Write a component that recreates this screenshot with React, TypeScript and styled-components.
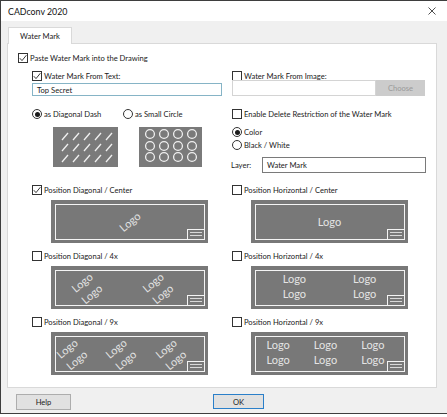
import styled, { createGlobalStyle } from "styled-components"

const GlobalStyle = createGlobalStyle`
  html, body {
    margin: 0;
    padding: 0;
    background: #ffffff;
  }
  body {
    font-family: Lato, "Noto Sans", "Liberation Sans", sans-serif;
    font-size: 7.6px;
    color: #1b1b1b;
  }
  * {
    box-sizing: border-box;
  }
`

const Window = styled.div`
  width: 447px;
  height: 414px;
  border: 1px solid #3e3e3e;
  border-right: none;
  background: #f0f0f0;
  display: flex;
  flex-direction: column;
`

const TitleBar = styled.div`
  height: 20px;
  background: #ffffff;
  display: flex;
  align-items: center;
  justify-content: space-between;
  padding: 0 11px 0 7px;
  font-size: 8.8px;
  color: #111;
`

const Body = styled.div`
  flex: 1;
  padding: 6px 10px 0 6px;
  display: flex;
  flex-direction: column;
`

const TabStrip = styled.div`
  display: flex;
  padding-left: 1px;
`

const Tab = styled.div`
  width: 64px;
  height: 17px;
  margin-bottom: -1px;
  position: relative;
  z-index: 1;
  background: #ffffff;
  border: 1px solid #d9d9d9;
  border-bottom: none;
  display: flex;
  align-items: center;
  justify-content: center;
`

const Panel = styled.div`
  width: 430px;
  height: 345px;
  background: #ffffff;
  border: 1px solid #d9d9d9;
  padding: 8px 10px 0 10px;
`

const Columns = styled.div<{ $mt: number }>`
  display: grid;
  grid-template-columns: 200px 194px;
  margin-left: 14px;
  margin-top: ${(p) => p.$mt}px;
`

const Column = styled.div`
  display: flex;
  flex-direction: column;
`

const Spaced = styled.div<{ $mt: number }>`
  margin-top: ${(p) => p.$mt}px;
`

const CheckRow = styled.label`
  display: flex;
  align-items: center;
  gap: 2px;
  height: 12px;
  white-space: nowrap;
`

const Box = styled.span`
  width: 10px;
  height: 10px;
  border: 1px solid #333333;
  background: #ffffff;
  display: flex;
  align-items: center;
  justify-content: center;
  flex: none;
`

const Round = styled.span`
  width: 10px;
  height: 10px;
  border-radius: 50%;
  border: 1px solid #333333;
  background: #ffffff;
  display: flex;
  align-items: center;
  justify-content: center;
  flex: none;
`

const Dot = styled.span`
  width: 5px;
  height: 5px;
  border-radius: 50%;
  background: #1b1b1b;
`

const Check = ({ label, checked }: { label: string; checked?: boolean }) => (
  <CheckRow>
    <Box>
      {checked ? (
        <svg width="8" height="8" viewBox="0 0 8 8">
          <polyline points="0.8,4.2 3,6.6 7.4,1.2" fill="none" stroke="#222" strokeWidth="0.9" />
        </svg>
      ) : null}
    </Box>
    {label}
  </CheckRow>
)

const Radio = ({ label, checked }: { label: string; checked?: boolean }) => (
  <CheckRow>
    <Round>{checked ? <Dot /> : null}</Round>
    {label}
  </CheckRow>
)

const TextField = styled.div<{ $width: number; $height: number; $border: string }>`
  width: ${(p) => p.$width}px;
  height: ${(p) => p.$height}px;
  border: 1px solid ${(p) => p.$border};
  background: #ffffff;
  display: flex;
  align-items: center;
  padding-left: 4px;
  white-space: nowrap;
`

const ChooseGroup = styled.div`
  display: flex;
  margin-top: -2px;
`

const ChooseButton = styled.div`
  width: 49px;
  height: 16px;
  background: #cccccc;
  color: #9a9a9a;
  display: flex;
  align-items: center;
  justify-content: center;
`

const RadioPair = styled.div`
  display: grid;
  grid-template-columns: 91px auto;
`

const PatternRow = styled.div`
  display: flex;
  gap: 21px;
  padding-left: 21px;
  margin-top: 7px;
`

const PatternBox = styled.div<{ $width: number }>`
  width: ${(p) => p.$width}px;
  height: 40px;
  background: #7a7a7a;
  display: flex;
`

const LayerRow = styled.div`
  display: flex;
  align-items: center;
  margin-top: 6px;
  margin-left: -1px;
`

const LayerLabel = styled.span`
  width: 31px;
`

const Section = styled.div<{ $mt: number }>`
  display: flex;
  flex-direction: column;
  margin-top: ${(p) => p.$mt}px;
`

const PreviewBox = styled.div`
  width: 157px;
  height: 43px;
  margin: 4px 0 0 19px;
  background: #787878;
  padding: 3.5px;
`

const Frame = styled.div`
  position: relative;
  height: 100%;
  border: 1.5px solid #f4f4f4;
  overflow: hidden;
`

const CornerIcon = styled.div`
  position: absolute;
  right: 0;
  bottom: 0;
  width: 17px;
  height: 10px;
  border-top: 1.5px solid #f4f4f4;
  border-left: 1.5px solid #f4f4f4;
  background: #787878;
  display: flex;
  flex-direction: column;
  justify-content: center;
  gap: 1.5px;
  padding: 0 2px;
  z-index: 2;
`

const CornerLine = styled.span`
  height: 1px;
  background: #d8d8d8;
`

const LogoText = styled.span`
  font-size: 11px;
  line-height: 15px;
  color: #e4e4e4;
`

const LogoGrid = styled.div<{ $cols: number; $gap: number; $shift: number; $lift: number }>`
  height: 100%;
  display: grid;
  grid-template-columns: repeat(${(p) => p.$cols}, auto);
  column-gap: ${(p) => p.$gap}px;
  justify-content: center;
  align-content: center;
  justify-items: center;
  padding-right: ${(p) => p.$shift}px;
  padding-bottom: ${(p) => p.$lift}px;
`

const DiagonalRow = styled.div<{ $gap: number; $shift: number }>`
  height: 100%;
  display: flex;
  align-items: center;
  justify-content: center;
  gap: ${(p) => p.$gap}px;
  padding-right: ${(p) => p.$shift}px;
`

const DiagonalGroup = styled.div`
  display: flex;
  flex-direction: column;
  align-items: center;
  transform: rotate(-40deg);
`

const Footer = styled.div`
  display: flex;
  align-items: flex-start;
  padding: 6px 0 0 9px;
`

const Button = styled.div<{ $width: number; $primary?: boolean }>`
  width: ${(p) => p.$width}px;
  height: ${(p) => (p.$primary ? 15 : 16)}px;
  margin-left: ${(p) => (p.$primary ? 142 : 0)}px;
  background: #e1e1e1;
  border: ${(p) => (p.$primary ? "1.5px solid #2a7fc9" : "1px solid #adadad")};
  display: flex;
  align-items: center;
  justify-content: center;
`

const DashPattern = () => (
  <svg width="65" height="40" viewBox="0 0 65 40">
    {[0, 1, 2].map((r) =>
      [0, 1, 2, 3, 4].map((c) => (
        <line
          key={`${r}-${c}`}
          x1={9 + c * 11}
          y1={13 + r * 11}
          x2={15 + c * 11}
          y2={6 + r * 11}
          stroke="#f0f0f0"
          strokeWidth="1.3"
        />
      ))
    )}
  </svg>
)

const CirclePattern = () => (
  <svg width="63" height="40" viewBox="0 0 63 40">
    {[7, 19, 30].map((y) =>
      [11, 25, 39, 53].map((x) => (
        <circle key={`${x}-${y}`} cx={x} cy={y} r="4.4" fill="none" stroke="#f0f0f0" strokeWidth="1.3" />
      ))
    )}
  </svg>
)

const Preview = ({ children }: { children: React.ReactNode }) => (
  <PreviewBox>
    <Frame>
      {children}
      <CornerIcon>
        <CornerLine />
        <CornerLine />
      </CornerIcon>
    </Frame>
  </PreviewBox>
)

const Diagonal = ({ groups, perGroup, gap, shift }: { groups: number; perGroup: number; gap: number; shift: number }) => (
  <DiagonalRow $gap={gap} $shift={shift}>
    {Array.from({ length: groups }).map((_, i) => (
      <DiagonalGroup key={i}>
        {Array.from({ length: perGroup }).map((_, j) => (
          <LogoText key={j}>Logo</LogoText>
        ))}
      </DiagonalGroup>
    ))}
  </DiagonalRow>
)

const Horizontal = ({ cols, rows, gap, shift }: { cols: number; rows: number; gap: number; shift: number }) => (
  <LogoGrid $cols={cols} $gap={gap} $shift={shift} $lift={rows > 1 ? 4 : 0}>
    {Array.from({ length: cols * rows }).map((_, i) => (
      <LogoText key={i}>Logo</LogoText>
    ))}
  </LogoGrid>
)

export default function App() {
  return (
    <>
      <GlobalStyle />
      <Window>
        <TitleBar>
          <span>CADconv 2020</span>
          <svg width="8" height="8" viewBox="0 0 8 8">
            <path d="M0.5 0.5 L7.5 7.5 M7.5 0.5 L0.5 7.5" stroke="#222" strokeWidth="0.8" />
          </svg>
        </TitleBar>
        <Body>
          <TabStrip>
            <Tab>Water Mark</Tab>
          </TabStrip>
          <Panel>
            <Check checked label="Paste Water Mark into the Drawing" />
            <Columns $mt={6}>
              <Column>
                <Check checked label="Water Mark From Text:" />
                <Spaced $mt={1}>
                  <TextField $width={190} $height={13} $border="#86b4c6">
                    Top Secret
                  </TextField>
                </Spaced>
                <Spaced $mt={12}>
                  <RadioPair>
                    <Radio checked label="as Diagonal Dash" />
                    <Radio label="as Small Circle" />
                  </RadioPair>
                </Spaced>
                <PatternRow>
                  <PatternBox $width={65}>
                    <DashPattern />
                  </PatternBox>
                  <PatternBox $width={63}>
                    <CirclePattern />
                  </PatternBox>
                </PatternRow>
              </Column>
              <Column>
                <Check label="Water Mark From Image:" />
                <ChooseGroup>
                  <TextField $width={144} $height={16} $border="#d4d4d4" />
                  <ChooseButton>Choose</ChooseButton>
                </ChooseGroup>
                <Spaced $mt={12}>
                  <Check label="Enable Delete Restriction of the Water Mark" />
                </Spaced>
                <Spaced $mt={6}>
                  <Radio checked label="Color" />
                </Spaced>
                <Spaced $mt={1}>
                  <Radio label="Black / White" />
                </Spaced>
                <LayerRow>
                  <LayerLabel>Layer:</LayerLabel>
                  <TextField $width={164} $height={16} $border="#7a7a7a">
                    Water Mark
                  </TextField>
                </LayerRow>
              </Column>
            </Columns>
            <Columns $mt={11}>
              <Column>
                <Section $mt={0}>
                  <Check checked label="Position Diagonal / Center" />
                  <Preview>
                    <Diagonal groups={1} perGroup={1} gap={0} shift={0} />
                  </Preview>
                </Section>
                <Section $mt={7}>
                  <Check label="Position Diagonal / 4x" />
                  <Preview>
                    <Diagonal groups={2} perGroup={2} gap={47} shift={15} />
                  </Preview>
                </Section>
                <Section $mt={7}>
                  <Check label="Position Diagonal / 9x" />
                  <Preview>
                    <Diagonal groups={3} perGroup={2} gap={26} shift={17} />
                  </Preview>
                </Section>
              </Column>
              <Column>
                <Section $mt={0}>
                  <Check label="Position Horizontal / Center" />
                  <Preview>
                    <Horizontal cols={1} rows={1} gap={0} shift={0} />
                  </Preview>
                </Section>
                <Section $mt={7}>
                  <Check label="Position Horizontal / 4x" />
                  <Preview>
                    <Horizontal cols={2} rows={2} gap={47} shift={0} />
                  </Preview>
                </Section>
                <Section $mt={7}>
                  <Check label="Position Horizontal / 9x" />
                  <Preview>
                    <Horizontal cols={3} rows={2} gap={24} shift={8} />
                  </Preview>
                </Section>
              </Column>
            </Columns>
          </Panel>
          <Footer>
            <Button $width={55}>Help</Button>
            <Button $width={51} $primary>
              OK
            </Button>
          </Footer>
        </Body>
      </Window>
    </>
  )
}
